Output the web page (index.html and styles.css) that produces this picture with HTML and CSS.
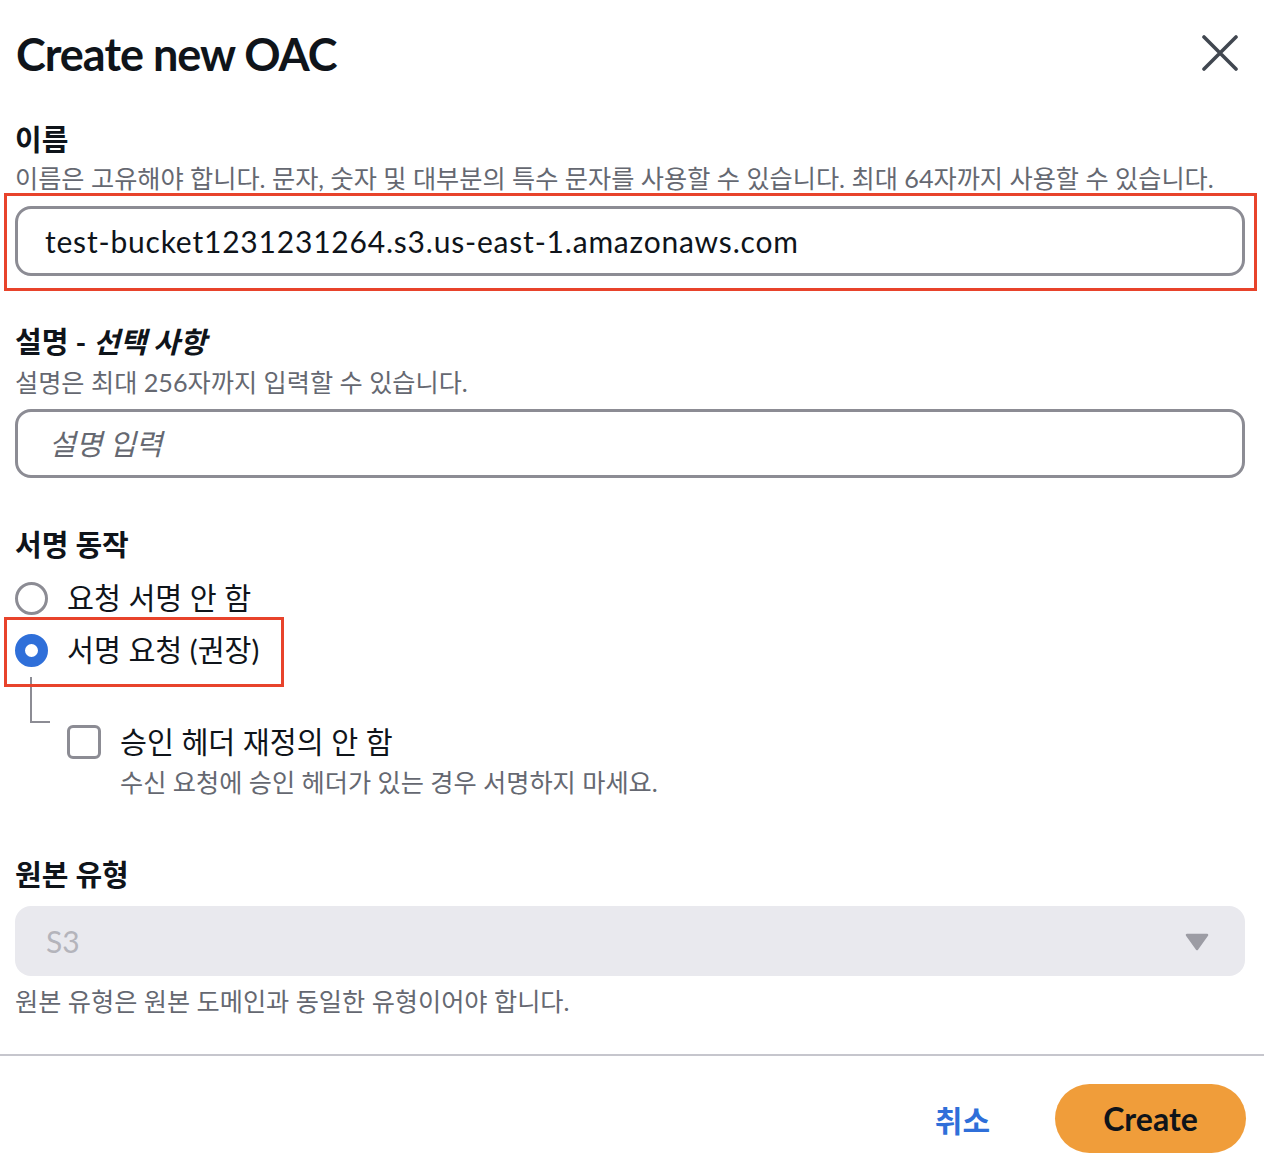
FILE: index.html
```html
<!DOCTYPE html>
<html lang="ko">
<head>
<meta charset="utf-8">
<title>Create new OAC</title>
<link rel="stylesheet" href="styles.css">
</head>
<body>
<div class="modal">
  <div class="header">
    <h1 class="title">Create new OAC</h1>
    <button class="close" aria-label="닫기">
      <svg width="36" height="36" viewBox="0 0 36 36"><path d="M2 2 L34 34 M34 2 L2 34" stroke="#414750" stroke-width="3.6" stroke-linecap="round" fill="none"/></svg>
    </button>
  </div>

  <div class="body">
    <div class="field field-name">
      <div class="label">이름</div>
      <div class="desc">이름은 고유해야 합니다. 문자, 숫자 및 대부분의 특수 문자를 사용할 수 있습니다. 최대 64자까지 사용할 수 있습니다.</div>
      <div class="input-wrap">
        <input class="input" type="text" value="test-bucket1231231264.s3.us-east-1.amazonaws.com">
        <span class="annot annot-input"></span>
      </div>
    </div>

    <div class="field field-desc">
      <div class="label">설명 - <i>선택 사항</i></div>
      <div class="desc desc-tight">설명은 최대 256자까지 입력할 수 있습니다.</div>
      <div class="input-wrap input-wrap-2">
        <input class="input" type="text" placeholder="설명 입력">
      </div>
    </div>

    <div class="field field-sign">
      <div class="label">서명 동작</div>
      <div class="radios">
        <div class="radio-row">
          <span class="radio"></span>
          <span class="radio-label">요청 서명 안 함</span>
        </div>
        <div class="radio-row radio-row-annot">
          <span class="radio radio-on"></span>
          <span class="radio-label">서명 요청 (권장)</span>
          <span class="annot annot-radio"></span>
        </div>
      </div>
      <div class="nested">
        <div class="connector"></div>
        <div class="check-item">
          <div class="check-row">
            <span class="checkbox"></span>
            <span class="check-label">승인 헤더 재정의 안 함</span>
          </div>
          <div class="desc check-desc">수신 요청에 승인 헤더가 있는 경우 서명하지 마세요.</div>
        </div>
      </div>
    </div>

    <div class="field field-origin">
      <div class="label">원본 유형</div>
      <div class="select">
        <span class="select-value">S3</span>
        <svg class="caret" width="24" height="18" viewBox="0 0 24 18"><path d="M2 2 L22 2 L12 16 Z" fill="#9c9ca4" stroke="#9c9ca4" stroke-width="2.5" stroke-linejoin="round"/></svg>
      </div>
      <div class="desc select-desc">원본 유형은 원본 도메인과 동일한 유형이어야 합니다.</div>
    </div>
  </div>

  <div class="footer">
    <button class="btn-cancel">취소</button>
    <button class="btn-create">Create</button>
  </div>
</div>
</body>
</html>
```

FILE: styles.css
```css
* { box-sizing: border-box; }

body {
  margin: 0;
  background: #ffffff;
  font-family: Lato, "Noto Sans CJK KR", sans-serif;
  color: #0f141a;
}

.modal {
  width: 1264px;
}

.header {
  display: flex;
  justify-content: space-between;
  align-items: flex-start;
  padding: 27px 26px 0 16px;
}

.title {
  margin: 0;
  font-size: 45px;
  line-height: 54px;
  font-weight: 700;
  letter-spacing: -1px;
}

.close {
  margin-top: 8px;
  padding: 0;
  border: 0;
  background: none;
  width: 36px;
  height: 36px;
}

.close svg { display: block; }

.body {
  padding: 0 19px 0 15px;
}

.field-name { margin-top: 41px; }
.field-desc { margin-top: 48px; }
.field-sign { margin-top: 49px; }
.field-origin { margin-top: 59px; }

.label {
  font-size: 29px;
  line-height: 36px;
  font-weight: 700;
}

.label i {
  font-style: italic;
}

.desc {
  margin-top: 4px;
  font-size: 25.2px;
  line-height: 32px;
  color: #656871;
  white-space: nowrap;
}

.desc-tight { margin-top: 6px; }

.input-wrap {
  position: relative;
  margin-top: 12px;
}

.input-wrap-2 { margin-top: 11px; }

.input {
  display: block;
  width: 100%;
  height: 70px;
  border: 3px solid #8c8c94;
  border-radius: 16px;
  padding: 0 27px;
  font-family: Lato, "Noto Sans CJK KR", sans-serif;
  font-size: 30px;
  letter-spacing: 0.8px;
  color: #0f141a;
  background: #ffffff;
  outline: none;
}

.input::placeholder {
  color: #656871;
  font-style: italic;
  letter-spacing: 0;
}

.input-wrap-2 .input { height: 69px; padding-left: 31px; font-size: 29px; }

.annot {
  position: absolute;
  border: 3.5px solid #e8432b;
  pointer-events: none;
}

.annot-input {
  top: -13px;
  bottom: -15px;
  left: -11px;
  right: -12px;
}

.radios {
  margin-top: 9px;
}

.radio-row {
  position: relative;
  display: flex;
  width: max-content;
  align-items: center;
  gap: 19px;
  height: 52px;
}

.radio {
  width: 33px;
  height: 33px;
  border-radius: 50%;
  border: 3.5px solid #8c8c94;
  background: #ffffff;
  flex: none;
}

.radio-on {
  border: 10px solid #2f6fd9;
}

.radio-label {
  font-size: 29.3px;
  line-height: 36px;
}

.annot-radio {
  top: -7px;
  bottom: -11px;
  left: -11px;
  right: -25px;
}

.nested {
  display: flex;
  align-items: flex-start;
}

.connector {
  margin-left: 15px;
  margin-top: 1px;
  width: 20px;
  height: 46px;
  border-left: 2px solid #8c8c94;
  border-bottom: 2px solid #8c8c94;
  flex: none;
}

.check-item {
  margin-left: 17px;
  margin-top: 48px;
}

.check-row {
  display: flex;
  align-items: center;
  gap: 19px;
}

.checkbox {
  width: 34px;
  height: 34px;
  border: 3.5px solid #8c8c94;
  border-radius: 6px;
  flex: none;
}

.check-label {
  font-size: 29.3px;
  line-height: 36px;
}

.check-desc {
  margin-top: 6px;
  padding-left: 53px;
}

.select {
  margin-top: 13px;
  height: 70px;
  border-radius: 16px;
  background: #e9e9ee;
  display: flex;
  align-items: center;
  justify-content: space-between;
  padding: 0 36px 0 31px;
}

.select-value {
  font-size: 30px;
  color: #b4b4bb;
}

.caret { display: block; margin-top: 2px; }

.select-desc { margin-top: 9px; }

.footer {
  margin-top: 37px;
  border-top: 2px solid #c6c6cd;
  padding: 28px 18px 9px 0;
  display: flex;
  justify-content: flex-end;
  align-items: center;
}

.btn-cancel {
  border: 0;
  background: none;
  padding: 0;
  margin-right: 65px;
  font-family: Lato, "Noto Sans CJK KR", sans-serif;
  font-size: 30px;
  font-weight: 700;
  color: #2f6fd9;
}

.btn-create {
  width: 191px;
  height: 69px;
  border: 0;
  border-radius: 35px;
  background: #f09d3a;
  font-family: Lato, "Noto Sans CJK KR", sans-serif;
  font-size: 32px;
  font-weight: 700;
  color: #0f141a;
}
```
